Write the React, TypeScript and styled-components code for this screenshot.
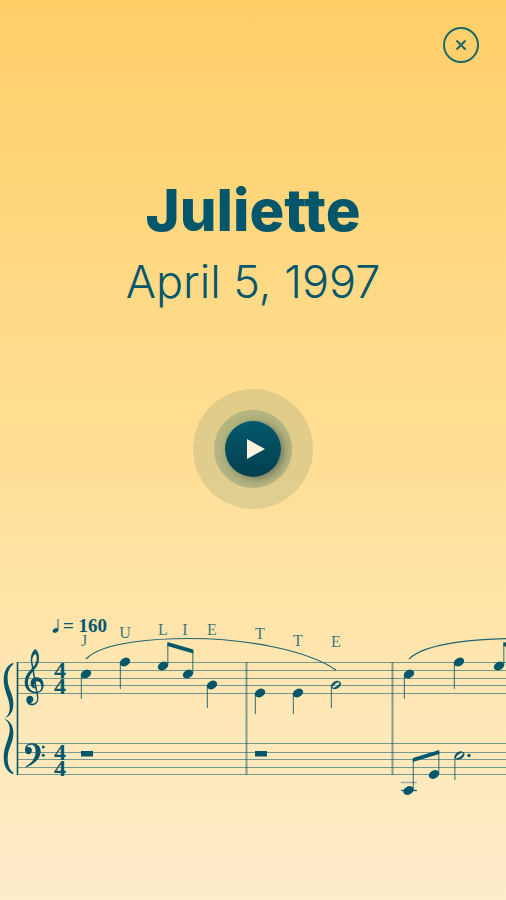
import React from "react";
import styled, { createGlobalStyle } from "styled-components";

const ink = "#04566a";

const GlobalStyle = createGlobalStyle`
  *, *::before, *::after { box-sizing: border-box; }
  body { margin: 0; font-family: Inter, "Open Sans", sans-serif; color: ${ink}; }
`;

const Page = styled.main`
  min-height: 100vh;
  display: flex;
  flex-direction: column;
  overflow: hidden;
  background: linear-gradient(180deg, #ffce67 0%, #ffd881 27%, #ffdf96 52%, #ffe7b5 78%, #ffeccb 100%);
`;

const TopBar = styled.header`
  display: flex;
  justify-content: flex-end;
  padding: 27px 27px 0;
`;

const CloseButton = styled.button`
  width: 36px;
  height: 36px;
  padding: 0;
  display: grid;
  place-items: center;
  border: 2px solid #1b6a65;
  border-radius: 50%;
  background: transparent;
  color: #1b6a65;
  cursor: pointer;
`;

const Heading = styled.section`
  padding-top: 111px;
  text-align: center;
`;

const Name = styled.h1`
  margin: 0;
  font-size: 58px;
  line-height: 72px;
  font-weight: 800;
`;

const BirthDate = styled.p`
  margin: 0;
  font-size: 45px;
  line-height: 72px;
  font-weight: 300;
`;

const PlayArea = styled.section`
  display: flex;
  justify-content: center;
  padding-top: 71px;
`;

const PlayButton = styled.button`
  width: 120px;
  height: 120px;
  padding: 0;
  display: grid;
  place-items: center;
  border: 0;
  border-radius: 50%;
  background: rgba(4, 86, 80, 0.12);
  cursor: pointer;
`;

const PlayRing = styled.span`
  width: 78px;
  height: 78px;
  display: grid;
  place-items: center;
  border-radius: 50%;
  background: rgba(4, 86, 90, 0.2);
`;

const PlayCore = styled.span`
  width: 56px;
  height: 56px;
  display: grid;
  place-items: center;
  border-radius: 50%;
  background: linear-gradient(180deg, #02596b, #033f50);
  box-shadow: 3px 2px 8px rgba(50, 60, 50, 0.5);
`;

const ScoreArea = styled.section`
  padding-top: 101px;
`;

const ScoreDrawing = styled.svg`
  display: block;
  width: 506px;
  height: 200px;
  overflow: visible;
`;

const ScoreText = styled.text<{ $size: number; $bold?: boolean; $light?: boolean }>`
  font-family: "Liberation Serif", serif;
  font-size: ${(p) => p.$size}px;
  font-weight: ${(p) => (p.$bold ? 700 : 400)};
  fill: ${ink};
  fill-opacity: ${(p) => (p.$light ? 0.8 : 1)};
  text-anchor: middle;
`;

const staffLines = [662, 670, 678, 685, 693, 743, 752, 759, 767, 774];
const letters: [string, number, number][] = [
  ["J", 84, 646],
  ["U", 125, 638],
  ["L", 163, 635],
  ["I", 185, 635],
  ["E", 212, 635],
  ["T", 260, 639],
  ["T", 298, 646],
  ["E", 336, 647],
];
type Note = { x: number; y: number; stem: number; up?: boolean; half?: boolean };
const notes: Note[] = [
  { x: 86, y: 674, stem: 699 },
  { x: 125, y: 662, stem: 689 },
  { x: 163, y: 666, stem: 643, up: true },
  { x: 188, y: 674, stem: 651, up: true },
  { x: 212, y: 685, stem: 708 },
  { x: 260, y: 693, stem: 714 },
  { x: 298, y: 693, stem: 714 },
  { x: 336, y: 685, stem: 708, half: true },
  { x: 409, y: 674, stem: 699 },
  { x: 459, y: 662, stem: 689 },
  { x: 499, y: 666, stem: 643, up: true },
  { x: 524, y: 674, stem: 651, up: true },
  { x: 408.5, y: 790.5, stem: 759, up: true },
  { x: 434, y: 774.5, stem: 752, up: true },
  { x: 459.5, y: 755.5, stem: 780, half: true },
];

function NoteMark({ x, y, stem, up, half }: Note) {
  const sx = up ? x + 4.8 : x - 4.6;
  return (
    <g>
      <path d={`M${sx} ${y + (up ? -1 : 1)}V${stem}`} stroke={ink} strokeOpacity="0.7" strokeWidth="1.2" />
      <g transform={`translate(${x} ${y}) rotate(-28)`}>
        {half ? (
          <path
            fillRule="evenodd"
            fill={ink}
            d="M-5.4 0a5.4 3.7 0 1 0 10.8 0a5.4 3.7 0 1 0 -10.8 0ZM-4.4 .5C-3-1.2 2.6-2.4 4.4-.7C3.6 1.4-2.8 2.5-4.4 .5Z"
          />
        ) : (
          <ellipse rx="5.5" ry="4" fill={ink} />
        )}
      </g>
    </g>
  );
}

const upperBrace =
  "M40 158C17 166 8 192 12 222C16 252 30 270 29 296C28 312 21 320 11 325C31 320 41 303 40 278C39 250 24 238 23 208C22 188 28 172 40 163Z";

function Score() {
  return (
    <ScoreDrawing viewBox="0 610 506 200" role="img" aria-label="Sheet music for Juliette">
      {staffLines.map((y) => (
        <path key={y} d={`M17 ${y + 0.5}H4000`} stroke={ink} strokeOpacity="0.55" />
      ))}
      <path d="M17.5 662V775" stroke={ink} strokeWidth="1.6" />
      <path d="M246.5 662V775M392.5 662V775" stroke={ink} strokeOpacity="0.5" strokeWidth="2" />

      <g transform="translate(0 610) scale(0.3333)" fill={ink}>
        <path d={upperBrace} />
        <path d={upperBrace} transform="matrix(1 0 0 -1 0 651)" />
        <path d="M106 117C117 124 122 150 111 168C101 184 84 196 84 218C84 236 96 246 110 245C124 244 127 232 122 221C117 211 106 213 104 220C102 227 104 232 109 236C98 236 91 227 92 218C93 207 102 201 111 202C123 203 131 212 131 225C131 240 122 249 108 250C88 250 73 236 74 215C75 192 93 180 104 165C112 152 112 136 106 132C100 135 96 145 97 154L115 260C117 275 108 286 96 286C86 286 79 278 79 269C79 261 84 257 90 257C97 257 101 263 100 269C99 276 94 279 90 279C100 285 114 277 111 261L93 158C90 137 98 122 106 117Z" />
        <path d="M75 418C75 405 87 399 99 400C114 401 123 411 122 427C120 449 100 464 78 472L77 469C97 458 107 444 107 425C107 411 102 404 94 404C87 404 82 408 81 412C89 408 96 414 96 421C96 428 91 433 85 433C78 433 75 427 75 418Z" />
        <circle cx="130" cy="411" r="4.5" />
        <circle cx="130" cy="436" r="4.5" />
      </g>

      <ScoreText $size={24} $bold x="60" y="678">4</ScoreText>
      <ScoreText $size={24} $bold x="60" y="694">4</ScoreText>
      <ScoreText $size={24} $bold x="60" y="760">4</ScoreText>
      <ScoreText $size={24} $bold x="60" y="776">4</ScoreText>

      <ellipse cx="55.5" cy="630.5" rx="2.9" ry="2.1" transform="rotate(-25 55.5 630.5)" fill={ink} />
      <path d="M58 630V619" stroke={ink} strokeWidth="0.9" />
      <ScoreText $size={19} $bold x="85" y="632">= 160</ScoreText>
      {letters.map(([letter, x, y]) => (
        <ScoreText key={`${letter}${x}`} $size={16} $light x={x} y={y}>{letter}</ScoreText>
      ))}

      <g fill="none" stroke={ink} strokeWidth="1.2" strokeOpacity="0.9">
        <path d="M86 659C103 641 160 638.5 190 638.5C245 638.5 307 650 336 670" />
        <path d="M409 659C426 642 483 638.5 513 638.5C568 638.5 630 650 659 670" />
      </g>

      {notes.map((note) => (
        <NoteMark key={`${note.x}-${note.y}`} {...note} />
      ))}
      <g fill={ink}>
        <path d="M167.5 642L193.3 649.6V653.6L167.5 646Z" />
        <path d="M503.5 642L529.3 649.6V653.6L503.5 646Z" />
        <path d="M412.8 758L439.3 750V754L412.8 762Z" />
        <rect x="81" y="751" width="12" height="5.5" />
        <rect x="255" y="751" width="12" height="5.5" />
        <circle cx="469" cy="755.5" r="1.7" />
      </g>
      <path d="M401 782.5H417" stroke={ink} strokeOpacity="0.4" strokeWidth="1.4" />
      <path d="M401 790.5H417" stroke={ink} strokeWidth="1.2" />
    </ScoreDrawing>
  );
}

export default function App() {
  return (
    <>
      <GlobalStyle />
      <Page>
        <TopBar>
          <CloseButton type="button" aria-label="Close">
            <svg width="12" height="12" viewBox="0 0 12 12" fill="none" stroke="currentColor" strokeWidth="2">
              <path d="M1.5 1.5L10.5 10.5M10.5 1.5L1.5 10.5" />
            </svg>
          </CloseButton>
        </TopBar>
        <Heading>
          <Name>Juliette</Name>
          <BirthDate>April 5, 1997</BirthDate>
        </Heading>
        <PlayArea>
          <PlayButton type="button" aria-label="Play">
            <PlayRing>
              <PlayCore>
                <svg width="24" height="24" viewBox="0 0 24 24">
                  <path d="M6 2L24 12L6 22Z" fill="#fff3df" />
                </svg>
              </PlayCore>
            </PlayRing>
          </PlayButton>
        </PlayArea>
        <ScoreArea>
          <Score />
        </ScoreArea>
      </Page>
    </>
  );
}
